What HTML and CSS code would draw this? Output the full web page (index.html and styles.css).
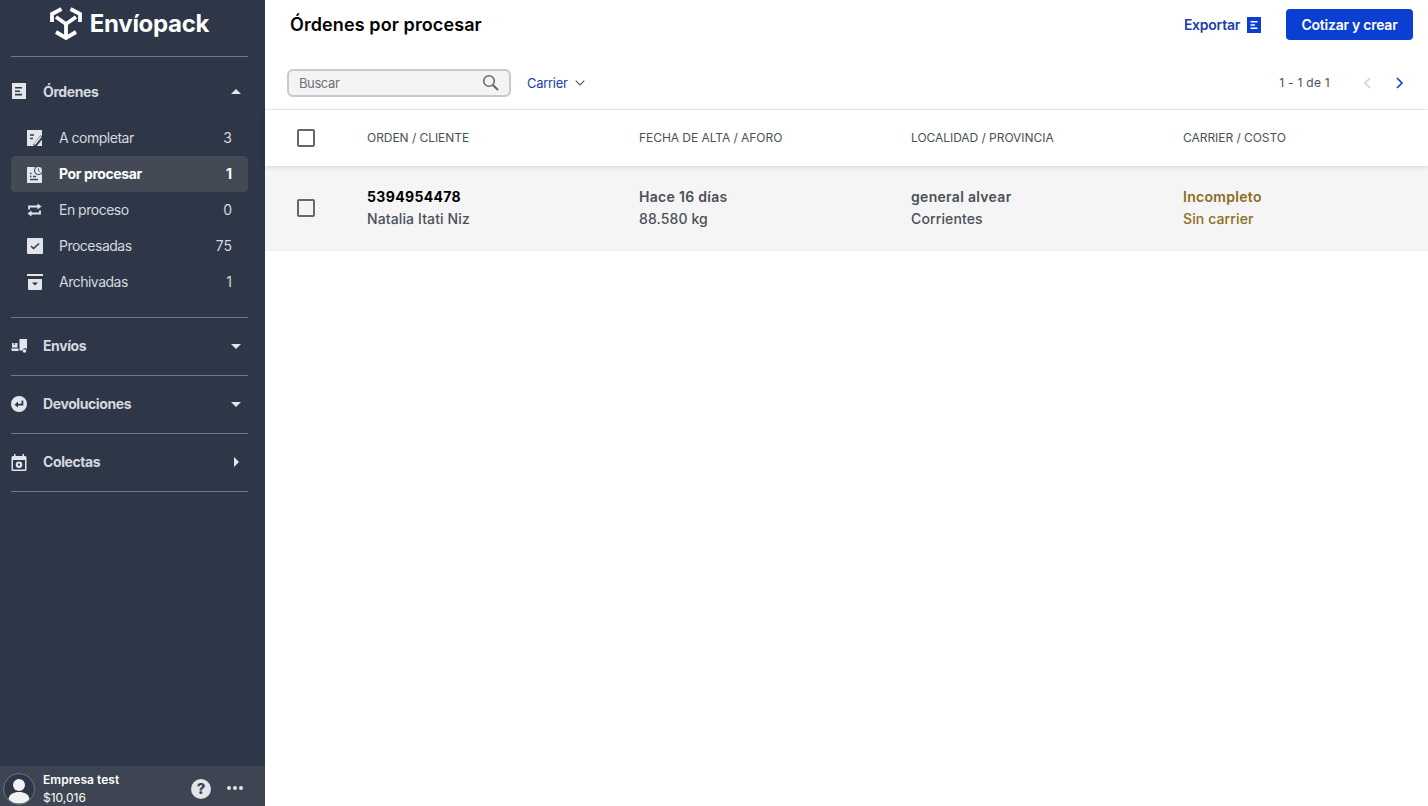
FILE: index.html
```html
<!DOCTYPE html>
<html lang="es">
<head>
<meta charset="utf-8">
<title>Órdenes por procesar</title>
<link rel="stylesheet" href="styles.css">
</head>
<body>
<div class="app">
  <aside class="sidebar">
    <div class="brand">
      <svg class="brand-mark" width="32" height="33" viewBox="0 0 32 33"><g fill="none" stroke="#fff" stroke-width="3.8"><path d="M2 15V7L11.500 2M20.500 2L30 7V15"/><path d="M6 10L16 17L26 10M16 17V30"/><path d="M6 25L16 31L26 25"/></g></svg>
      <span class="brand-name">Envíopack</span>
    </div>
    <nav class="nav">
      <section class="group group-open">
        <div class="group-head">
          <svg class="gi" width="16" height="16" viewBox="0 0 16 16"><path fill="#e2e5e9" fill-rule="evenodd" d="M1 0h14v16H1zM4 4v1.600h7V4zM4 7.400v1.600h5V7.400zM4 10.800v1.600h7v-1.600z"/></svg>
          <span class="group-label">Órdenes</span>
          <span class="caret caret-up"></span>
        </div>
        <ul class="items">
          <li class="item"><svg class="ii" width="16" height="16" viewBox="0 0 16 16"><rect width="15" height="16" fill="#e2e5e9"/><path d="M3 5h4M3 8.500h3" stroke="#2d3748" stroke-width="1.400" fill="none"/><path d="M7.500 16L15 6.500" stroke="#2d3748" stroke-width="3.800" fill="none"/><path d="M7.500 14.500L14 6.500" stroke="#e2e5e9" stroke-width="1.700" fill="none"/></svg><span class="item-label">A completar</span><span class="count">3</span></li>
          <li class="item item-active"><svg class="ii" width="16" height="17" viewBox="0 0 16 17"><rect y="1" width="15" height="16" fill="#e2e5e9"/><path d="M3 7.500h1.500M3 10.500h1.500M6 10.500h3M3 13.500h8" stroke="#434a55" stroke-width="1.400" fill="none"/><circle cx="11.500" cy="4.500" r="4.500" fill="#434a55"/><circle cx="11.500" cy="4.500" r="3.400" fill="#e2e5e9"/><path d="M11.500 2.500v2.200l1.400 1" fill="none" stroke="#434a55" stroke-width="1"/></svg><span class="item-label">Por procesar</span><span class="count">1</span></li>
          <li class="item"><svg class="ii" width="16" height="16" viewBox="0 0 16 16"><path fill="none" stroke="#e2e5e9" stroke-width="1.800" d="M2 7.500V4.500h9M13 8.500v3H4"/><path fill="#e2e5e9" d="M10.500 1.500l4 3-4 3zM4.500 8.500v6l-4-3z"/></svg><span class="item-label">En proceso</span><span class="count">0</span></li>
          <li class="item"><svg class="ii" width="16" height="16" viewBox="0 0 16 16"><path fill="#e2e5e9" fill-rule="evenodd" d="M1 0h14a1 1 0 0 1 1 1v14a1 1 0 0 1-1 1H1a1 1 0 0 1-1-1V1a1 1 0 0 1 1-1zM3.500 8.500L6.500 11.500L12.500 6L11.500 5L6.500 9.500L4.500 7.500z"/></svg><span class="item-label">Procesadas</span><span class="count">75</span></li>
          <li class="item"><svg class="ii" width="16" height="16" viewBox="0 0 16 16"><path fill="#e2e5e9" fill-rule="evenodd" d="M0 0h16v2H0zM1 5h14v10a1 1 0 0 1-1 1H2a1 1 0 0 1-1-1zM5 8.500L8 11.500L11 8.500z"/></svg><span class="item-label">Archivadas</span><span class="count">1</span></li>
        </ul>
      </section>
      <section class="group">
        <div class="group-head">
          <svg class="gi" width="16" height="14" viewBox="0 0 16 14"><path fill="#e2e5e9" d="M8.500 0H16v10a2.500 2.500 0 0 0-4.300 1.500H8.500zM0 9.500h7.500v2.500H1zM1 4h1.800v2h1V4h2.700v4.500H1z"/><circle cx="13.500" cy="12" r="1.800" fill="#e2e5e9"/></svg>
          <span class="group-label group-label-closed">Envíos</span>
          <span class="caret caret-down"></span>
        </div>
      </section>
      <section class="group">
        <div class="group-head">
          <svg class="gi" width="16" height="16" viewBox="0 0 16 16"><path fill="#e2e5e9" fill-rule="evenodd" d="M8 0a8 8 0 1 1 0 16A8 8 0 0 1 8 0zM10.500 4.500v3.200H7V5.500L3.500 8.700 7 11.500V9.500h5.300v-5z"/></svg>
          <span class="group-label group-label-closed">Devoluciones</span>
          <span class="caret caret-down"></span>
        </div>
      </section>
      <section class="group">
        <div class="group-head">
          <svg class="gi" width="16" height="17" viewBox="0 0 16 17"><path fill="#e2e5e9" fill-rule="evenodd" d="M3 0h1.500v2h7V0H13v2h1A1.500 1.500 0 0 1 15.500 3.500V15.500A1.500 1.500 0 0 1 14 17H2A1.500 1.500 0 0 1 .5 15.500V3.500A1.500 1.500 0 0 1 2 2h1zM2 6v9.500h12V6z"/><circle cx="8" cy="10.700" r="3.300" fill="#e2e5e9"/><circle cx="8" cy="10.700" r="1.100" fill="#2d3748"/></svg>
          <span class="group-label group-label-closed">Colectas</span>
          <span class="caret caret-right"></span>
        </div>
      </section>
    </nav>
    <footer class="account">
      <svg class="avatar" width="32" height="32" viewBox="0 0 32 32"><circle cx="16" cy="16" r="15.500" fill="#2d3748" stroke="#6f7782"/><circle cx="16" cy="12" r="6" fill="#f2f2f2"/><path fill="#f2f2f2" d="M5.500 26c1-5 5-7 10.500-7s9.500 2 10.500 7c-2.500 3-6 4.500-10.500 4.500S8 29 5.500 26z"/></svg>
      <div class="account-text">
        <div class="account-name">Empresa test</div>
        <div class="account-balance">$10,016</div>
      </div>
      <span class="help">?</span>
      <span class="more"><i></i><i></i><i></i></span>
    </footer>
  </aside>
  <main class="main">
    <header class="topbar">
      <h1 class="title">Órdenes por procesar</h1>
      <div class="top-actions">
        <a class="export">Exportar
          <svg width="14" height="16" viewBox="0 0 14 16"><path fill="#0b3fd1" fill-rule="evenodd" d="M0 0h14v16H0zM3.500 4v1.500h7V4zM3.500 7.200v1.500h4.500V7.200zM3.500 10.500V12h7v-1.500z"/></svg>
        </a>
        <button class="primary">Cotizar y crear</button>
      </div>
    </header>
    <div class="toolbar">
      <div class="search">
        <span class="search-text">Buscar</span>
        <svg width="17" height="17" viewBox="0 0 17 17"><circle cx="7" cy="7" r="5.300" fill="none" stroke="#666b72" stroke-width="1.600"/><path d="M11 11l5 5" stroke="#666b72" stroke-width="2.200" fill="none"/></svg>
      </div>
      <div class="filter">Carrier
        <svg width="10" height="6" viewBox="0 0 10 6"><path d="M.7.7L5 5 9.300.7" fill="none" stroke="#4a5568" stroke-width="1.100"/></svg>
      </div>
      <div class="pager">
        <span class="pager-text">1 - 1 de 1</span>
        <svg class="pager-prev" width="8" height="12" viewBox="0 0 8 12"><path d="M7 1L2 6l5 5" fill="none" stroke="#c9d1e4" stroke-width="1.600"/></svg>
        <svg class="pager-next" width="8" height="12" viewBox="0 0 8 12"><path d="M1 1l5 5-5 5" fill="none" stroke="#0b3fd1" stroke-width="1.600"/></svg>
      </div>
    </div>
    <div class="table">
      <div class="thead">
        <span class="check"></span>
        <span class="th">ORDEN / CLIENTE</span>
        <span class="th">FECHA DE ALTA / AFORO</span>
        <span class="th">LOCALIDAD / PROVINCIA</span>
        <span class="th">CARRIER / COSTO</span>
      </div>
      <div class="row">
        <span class="check"></span>
        <div class="cell"><strong class="strong-black">5394954478</strong><span>Natalia Itati Niz</span></div>
        <div class="cell"><strong>Hace 16 días</strong><span>88.580 kg</span></div>
        <div class="cell"><strong>general alvear</strong><span>Corrientes</span></div>
        <div class="cell cell-warn"><strong>Incompleto</strong><span>Sin carrier</span></div>
      </div>
    </div>
  </main>
</div>
</body>
</html>
```
FILE: styles.css
```css
* { box-sizing: border-box; }
html, body { margin: 0; height: 100%; }
body { font-family: Inter, "Liberation Sans", sans-serif; background: #fff; color: #4a5058; overflow: hidden; }
.app { display: flex; height: 806px; }

.sidebar { width: 265px; flex: none; background: #2d3748; display: flex; flex-direction: column; color: #e2e5e9; }
.brand { height: 57px; margin: 0 17px 0 11px; border-bottom: 1px solid #6d7889; display: flex; align-items: flex-start; justify-content: center; gap: 8px; padding-top: 7px; }
.brand-mark { flex: none; }
.brand-name { font-size: 24px; line-height: 34px; font-weight: 700; color: #fff; letter-spacing: -.3px; }
.nav { flex: 1; }
.group { margin: 0 17px 0 11px; border-bottom: 1px solid #6d7889; padding: 5px 0 6px; }
.group-head { height: 46px; display: flex; align-items: center; }
.gi { flex: none; margin-right: 16px; }
.group-label { flex: 1; font-size: 14px; font-weight: 700; color: #d5d9de; letter-spacing: -.4px; }
.group-label-closed { margin-bottom: 2px; }
.group-open { padding: 11px 0 17px; }
.group-open .group-head { margin-bottom: 6px; }
.caret { width: 0; height: 0; margin-right: 7px; }
.caret-up { border: 5px solid transparent; border-top: 0; border-bottom: 5px solid #e2e5e9; }
.caret-down { border: 5px solid transparent; border-bottom: 0; border-top: 5px solid #e2e5e9; }
.caret-right { border: 5px solid transparent; border-right: 0; border-left: 5px solid #e2e5e9; margin-right: 9px; }
.items { list-style: none; margin: 0; padding: 0; }
.item { height: 36px; display: flex; align-items: center; padding: 0 16px; border-radius: 4px; font-size: 14px; color: #d5d9de; letter-spacing: -.5px; }
.ii { flex: none; margin-right: 16px; }
.item-label { flex: 1; margin-bottom: 2px; }
.count { font-size: 14px; letter-spacing: 0; margin-bottom: 2px; }
.item-active { background: #434a55; color: #fff; font-weight: 700; letter-spacing: -.4px; }

.account { height: 40px; flex: none; background: #3c4551; display: flex; align-items: center; padding: 0 22px 0 3px; }
.avatar { flex: none; margin-right: 8px; margin-top: 6px; }
.account-text { flex: 1; font-size: 12px; line-height: 18px; color: #fff; margin-top: 5px; }
.account-name { font-weight: 600; letter-spacing: .05px; }
.help { width: 20px; height: 20px; border-radius: 50%; background: #e2e5e9; color: #3c4551; font-size: 15px; font-weight: 800; line-height: 20px; text-align: center; margin-right: 16px; margin-top: 6px; }
.more { display: flex; gap: 2px; margin-top: 4px; }
.more i { width: 4px; height: 4px; border-radius: 50%; background: #e2e5e9; display: block; }

.main { flex: 1; min-width: 0; display: flex; flex-direction: column; }
.topbar { height: 49px; display: flex; align-items: center; justify-content: space-between; padding: 0 15px 0 25px; }
.title { margin: 0; font-size: 18px; font-weight: 600; color: #000; letter-spacing: .1px; }
.top-actions { display: flex; align-items: center; gap: 25px; }
.export { display: flex; align-items: center; gap: 7px; font-size: 14px; font-weight: 600; color: #1b3fa8; letter-spacing: -.25px; }
.primary { width: 127px; height: 31px; border: 0; border-radius: 4px; background: #0b3fd1; color: #fff; font: 600 14px Inter, "Liberation Sans", sans-serif; letter-spacing: -.25px; padding: 0; }
.toolbar { height: 61px; display: flex; align-items: center; padding: 7px 24px 0 22px; border-bottom: 1px solid #f0f0f0; }
.search { width: 224px; height: 28px; border: 2px solid #c9c9c9; border-radius: 6px; background: #f4f4f4; display: flex; align-items: center; justify-content: space-between; padding: 0 10px; }
.search-text { font-size: 13px; color: #6b7078; letter-spacing: -.4px; }
.filter { margin-left: 16px; display: flex; align-items: center; gap: 7px; font-size: 13px; color: #1b3fa8; letter-spacing: -.3px; }
.pager { margin-left: auto; display: flex; align-items: center; }
.pager-text { font-size: 12px; color: #4a5058; margin-right: 33px; letter-spacing: .27px; }
.pager-prev { margin-right: 25px; }

.thead, .row { display: grid; grid-template-columns: 102px 272px 272px 272px 1fr; align-items: center; }
.thead { height: 56px; position: relative; box-shadow: 0 1px 5px rgba(0,0,0,.14); }
.th { font-size: 12px; color: #4a5058; letter-spacing: -.05px; margin-bottom: 2px; }
.check { width: 18px; height: 18px; border: 2px solid #666; border-radius: 2px; margin-left: 32px; }
.row { height: 85px; background: #f5f5f5; border-bottom: 1px solid #f0f0f0; }
.cell { display: flex; flex-direction: column; font-size: 14px; line-height: 22px; color: #4a5058; letter-spacing: .12px; font-weight: 500; }
.cell strong { font-weight: 600; letter-spacing: .3px; }
.cell .strong-black { color: #000; font-weight: 700; letter-spacing: .35px; }
.cell-warn { color: #8a6d22; }
```
